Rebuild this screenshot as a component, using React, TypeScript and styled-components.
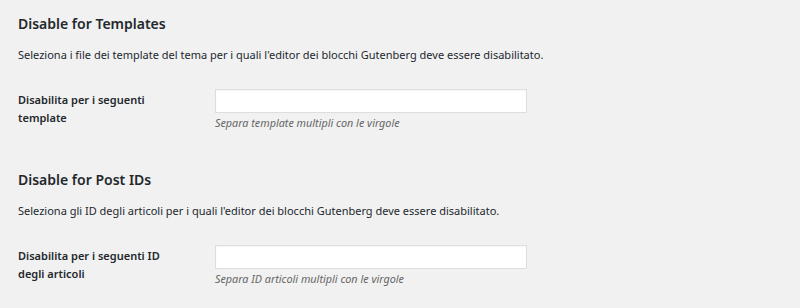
import React from 'react';
import styled, { createGlobalStyle } from 'styled-components';

const GlobalStyle = createGlobalStyle`
  html, body {
    margin: 0;
    padding: 0;
    background: #f1f1f1;
  }
  body {
    font-family: "Noto Sans", "Open Sans", sans-serif;
    color: #23282d;
  }
`;

const Page = styled.div`
  padding: 14px 18px 0;
`;

const Section = styled.section`
  & + & {
    margin-top: 39px;
  }
`;

const Heading = styled.h2`
  margin: 0;
  font-size: 14px;
  font-weight: 600;
  line-height: 20px;
`;

const Description = styled.p`
  margin: 12px 0 0;
  font-size: 11px;
  line-height: 18px;
`;

const FieldRow = styled.div`
  display: grid;
  grid-template-columns: 197px 312px;
  margin-top: 25px;
`;

const Label = styled.label`
  font-size: 11px;
  font-weight: 600;
  line-height: 18px;
  padding-top: 2px;
  width: 160px;
`;

const Field = styled.div`
  display: flex;
  flex-direction: column;
`;

const TextInput = styled.input`
  box-sizing: border-box;
  width: 312px;
  height: 24px;
  margin: 0;
  border: 1px solid #dddddd;
  background: #ffffff;
  box-shadow: inset 0 1px 2px rgba(0, 0, 0, 0.04);
  outline: none;
`;

const Hint = styled.p`
  margin: 2px 0 0;
  font-size: 10.8px;
  font-style: italic;
  color: #666666;
  line-height: 16px;
`;

type SettingProps = {
  title: string
  description: string
  label: string
  hint: string
}

const Setting = ({ title, description, label, hint }: SettingProps) => (
  <Section>
    <Heading>{title}</Heading>
    <Description>{description}</Description>
    <FieldRow>
      <Label>{label}</Label>
      <Field>
        <TextInput type="text" />
        <Hint>{hint}</Hint>
      </Field>
    </FieldRow>
  </Section>
);

export default function App() {
  return (
    <>
      <GlobalStyle />
      <Page>
        <Setting
          title="Disable for Templates"
          description="Seleziona i file dei template del tema per i quali l'editor dei blocchi Gutenberg deve essere disabilitato."
          label="Disabilita per i seguenti template"
          hint="Separa template multipli con le virgole"
        />
        <Setting
          title="Disable for Post IDs"
          description="Seleziona gli ID degli articoli per i quali l'editor dei blocchi Gutenberg deve essere disabilitato."
          label="Disabilita per i seguenti ID degli articoli"
          hint="Separa ID articoli multipli con le virgole"
        />
      </Page>
    </>
  );
}
